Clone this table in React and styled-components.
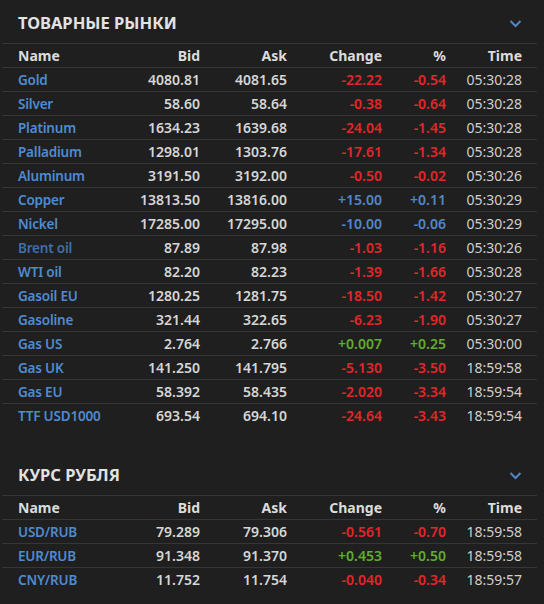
import React from 'react';
import styled, { createGlobalStyle } from 'styled-components';

const commodities = [
  ['Gold', '4080.81', '4081.65', '-22.22', '-0.54', '05:30:28'],
  ['Silver', '58.60', '58.64', '-0.38', '-0.64', '05:30:28'],
  ['Platinum', '1634.23', '1639.68', '-24.04', '-1.45', '05:30:28'],
  ['Palladium', '1298.01', '1303.76', '-17.61', '-1.34', '05:30:28'],
  ['Aluminum', '3191.50', '3192.00', '-0.50', '-0.02', '05:30:26'],
  ['Copper', '13813.50', '13816.00', '+15.00', '+0.11', '05:30:29', 'blue'],
  ['Nickel', '17285.00', '17295.00', '-10.00', '-0.06', '05:30:29', 'blue'],
  ['Brent oil', '87.89', '87.98', '-1.03', '-1.16', '05:30:26', 'red', true],
  ['WTI oil', '82.20', '82.23', '-1.39', '-1.66', '05:30:28'],
  ['Gasoil EU', '1280.25', '1281.75', '-18.50', '-1.42', '05:30:27'],
  ['Gasoline', '321.44', '322.65', '-6.23', '-1.90', '05:30:27'],
  ['Gas US', '2.764', '2.766', '+0.007', '+0.25', '05:30:00', 'green'],
  ['Gas UK', '141.250', '141.795', '-5.130', '-3.50', '18:59:58'],
  ['Gas EU', '58.392', '58.435', '-2.020', '-3.34', '18:59:54'],
  ['TTF USD1000', '693.54', '694.10', '-24.64', '-3.43', '18:59:54'],
];

const rubles = [
  ['USD/RUB', '79.289', '79.306', '-0.561', '-0.70', '18:59:58'],
  ['EUR/RUB', '91.348', '91.370', '+0.453', '+0.50', '18:59:58', 'green'],
  ['CNY/RUB', '11.752', '11.754', '-0.040', '-0.34', '18:59:57'],
];

const tones = {
  red: '#e3262b',
  green: '#5fae2e',
  blue: '#5088cc',
};

const GlobalStyle = createGlobalStyle`
  body {
    margin: 0;
    background: #1f1f1f;
    font-family: "Noto Sans", "Open Sans", sans-serif;
  }
`;

const Page = styled.div`
  width: 544px;
  height: 604px;
  background: #1f1f1f;
  padding: 0 7px 0 2px;
  box-sizing: border-box;
`;

const Section = styled.section`
  margin-bottom: 24px;
`;

const TitleBar = styled.div`
  height: 44px;
  display: flex;
  align-items: center;
  justify-content: space-between;
  padding: 2px 15px 0 16px;
  box-sizing: border-box;
  border-bottom: 1px solid #363636;
`;

const Title = styled.h2`
  margin: 0;
  font-size: 16.5px;
  font-weight: 700;
  color: #e2e2e2;
`;

const Chevron = styled.svg`
  width: 13px;
  height: 9px;
  margin-top: 2px;
`;

const Row = styled.div`
  display: grid;
  grid-template-columns: 100px 82px 87px 95px 64px 76px;
  height: 24px;
  align-items: center;
  padding-left: 16px;
  border-bottom: 1px solid ${p => (p.last ? 'transparent' : '#363636')};
  box-sizing: border-box;
  font-size: 14px;
`;

const Head = styled.div`
  text-align: ${p => (p.left ? 'left' : 'right')};
  font-weight: 700;
  color: #dcdcdc;
`;

const Name = styled.div`
  font-size: 13.5px;
  font-weight: 600;
  letter-spacing: -0.2px;
  color: ${p => (p.visited ? '#3f6ea8' : '#4f8bd0')};
  white-space: nowrap;
`;

const Price = styled.div`
  text-align: right;
  font-weight: 600;
  color: #d6d6d6;
`;

const Delta = styled.div`
  text-align: right;
  font-weight: 600;
  color: ${p => tones[p.tone]};
`;

const Time = styled.div`
  text-align: right;
  color: #cfcfcf;
`;

function Table({ title, rows }) {
  return (
    <Section>
      <TitleBar>
        <Title>{title}</Title>
        <Chevron viewBox="0 0 13 9">
          <path d="M1.5 2 L6.5 7 L11.5 2" fill="none" stroke="#4f86c4" strokeWidth="2" />
        </Chevron>
      </TitleBar>
      <Row>
        <Head left>Name</Head>
        <Head>Bid</Head>
        <Head>Ask</Head>
        <Head>Change</Head>
        <Head>%</Head>
        <Head>Time</Head>
      </Row>
      {rows.map(([name, bid, ask, ch, pct, time, tone = 'red', visited], i) => (
        <Row key={name} last={i === rows.length - 1}>
          <Name visited={visited}>{name}</Name>
          <Price>{bid}</Price>
          <Price>{ask}</Price>
          <Delta tone={tone}>{ch}</Delta>
          <Delta tone={tone}>{pct}</Delta>
          <Time>{time}</Time>
        </Row>
      ))}
    </Section>
  );
}

export default function App() {
  return (
    <>
      <GlobalStyle />
      <Page>
        <Table title="ТОВАРНЫЕ РЫНКИ" rows={commodities} />
        <Table title="КУРС РУБЛЯ" rows={rubles} />
      </Page>
    </>
  );
}
